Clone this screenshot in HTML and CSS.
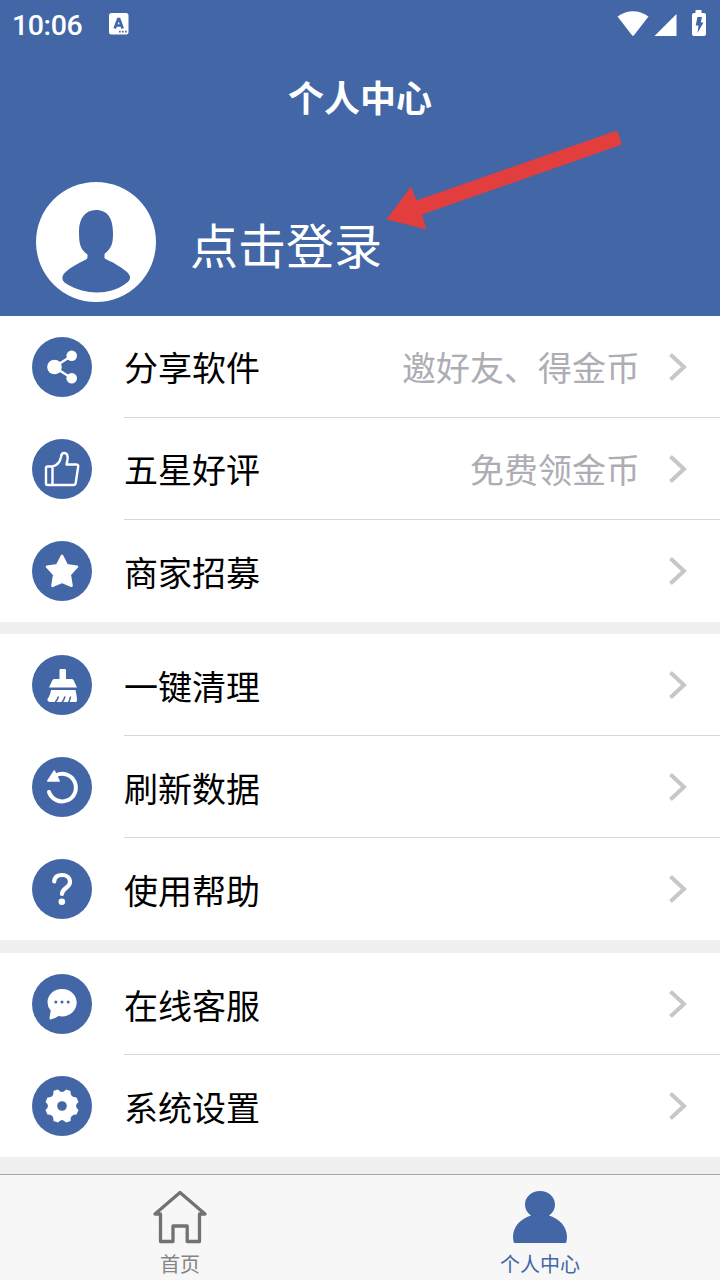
FILE: index.html
```html
<!DOCTYPE html>
<html lang="zh-CN">
<head>
<meta charset="utf-8">
<title>个人中心</title>
<link rel="stylesheet" href="styles.css">
</head>
<body>
<div class="screen">
  <header class="header">
    <div class="status">
      <span class="clock">10:06</span>
      <svg class="ime" width="20" height="22" viewBox="0 0 20 22"><rect width="19.500" height="21.500" rx="2.500" fill="#fff"/><path d="M5.700 15.500 9.200 6h1L13.700 15.500M7 12.500h5.500" fill="none" stroke="#4266a6" stroke-width="2.700"/><path d="M10 18.700h1.700M13 18.700h1.700M16 18.700h1.700" stroke="#4266a6" stroke-width="1.700"/></svg>
      <svg class="signals" width="92" height="28" viewBox="0 0 92 28">
        <path d="M0.500 6.500Q16-3.800 31.500 6.500L17 25.200q-1 1-2 0z" fill="#fff"/>
        <path d="M59.500 4v22H37.500z" fill="#fff"/>
        <path d="M78.500 0h6v3h2.500q2 0 2 2v19q0 2-2 2H77q-2 0-2-2V5q0-2 2-2h1.500z" fill="#fff"/>
        <path d="M80.500 7h4.500l-1.200 5.500h2.700l-6 10.500 1-7.500h-2.800z" fill="#4266a6"/>
      </svg>
    </div>
    <h1 class="title">个人中心</h1>
    <div class="profile">
      <svg class="avatar" width="120" height="120" viewBox="0 0 120 120"><circle cx="60" cy="60" r="60" fill="#fff"/><path d="M60 28C49 28 43 37 43 49c0 13 1 18 8.500 23.500v3Q51.500 77 47 79C38 83.500 27 90 26.500 95c-.5 4 2 5.500 5 7.500 18 10.500 42 10.500 57 0 3-2 6-4 5.500-8-1-5-11-10-17-14Q69 77 68.500 76v-4C76 66 77 61 77 51 77 37 72 28 60 28z" fill="#4266a6"/></svg>
      <span class="login">点击登录</span>
    </div>
    <svg class="arrow" width="236" height="102" viewBox="0 0 236 102"><path d="M0.500 89.500 25 56.500 30.500 70.500 231 0.500 236 14.500 36 84.500 40.500 99.500z" fill="#e33e3e"/></svg>
  </header>

  <main class="groups">
    <section class="group">
      <div class="row">
        <svg class="icon" viewBox="0 0 60 60"><circle class="disc" cx="30" cy="30" r="30"/><path d="M22 30 39.500 19M22 30l17.500 11" stroke="#fff" stroke-width="2.200"/><circle cx="22.500" cy="30" r="7.300" fill="#fff"/><circle cx="39.700" cy="18.800" r="5.300" fill="#fff"/><circle cx="39.700" cy="41.300" r="5.300" fill="#fff"/></svg>
        <div class="cell"><span class="label">分享软件</span><span class="note">邀好友、得金币</span><svg class="chevron" viewBox="0 0 18 28"><path d="m1.500 1.500 13.500 12.500L1.500 26.500"/></svg></div>
      </div>
      <div class="row">
        <svg class="icon" viewBox="0 0 60 60"><circle class="disc" cx="30" cy="30" r="30"/><path class="line" d="M20.500 46h-5q-1.500 0-1.500-1.500V29q0-1.500 1.500-1.500h5M20.500 46V27.500q7-1.500 8.500-9.500Q29.500 14 32 14c3.500 0 4 3.500 3.500 6.500L34.500 25.500H44q2.500 0 2.200 2L43.700 44q-.3 2-2.300 2z"/></svg>
        <div class="cell"><span class="label">五星好评</span><span class="note">免费领金币</span><svg class="chevron" viewBox="0 0 18 28"><path d="m1.500 1.500 13.500 12.500L1.500 26.500"/></svg></div>
      </div>
      <div class="row">
        <svg class="icon" viewBox="0 0 60 60"><circle class="disc" cx="30" cy="30" r="30"/><path d="m30 14.800 4.700 9.400 10.300 1.500-7.300 7.800L39.500 44.800 30 40.700 20.500 44.800 22.300 33.500 15 25.700l10.300-1.500z" fill="#fff" stroke="#fff" stroke-width="2.600" stroke-linejoin="round"/></svg>
        <div class="cell low"><span class="label">商家招募</span><svg class="chevron" viewBox="0 0 18 28"><path d="m1.500 1.500 13.500 12.500L1.500 26.500"/></svg></div>
      </div>
    </section>

    <section class="group tools">
      <div class="row">
        <svg class="icon" viewBox="0 0 60 60"><circle class="disc" cx="30" cy="30" r="30"/><path d="M27.500 15q0-1 1-1h4.500q1 0 1 1v9h5.500q1.500 0 2 1l3.500 7.500H17L20.500 25q.5-1 2-1h5zM19 35h24.500q1.500 6 1.500 10.500 0 1.500-1.500 1.500H18q-3-.5-2.500-3Q18 41 19 35z" fill="#fff"/><path d="M26.500 41.500Q25.500 45 23 47.500M33 41.500Q32 45 30 47.500M38.500 41.500Q38 45 36.500 47.500" fill="none" stroke="#4266a6" stroke-width="1.500"/></svg>
        <div class="cell low"><span class="label">一键清理</span><svg class="chevron" viewBox="0 0 18 28"><path d="m1.500 1.500 13.500 12.500L1.500 26.500"/></svg></div>
      </div>
      <div class="row">
        <svg class="icon" viewBox="0 0 60 60"><circle class="disc" cx="30" cy="30" r="30"/><path d="M24 18.200A13.800 13.800 0 1 1 17 35" fill="none" stroke="#fff" stroke-width="4" stroke-linecap="round"/><path d="M22.300 14 15.800 24h11.400z" fill="#fff" stroke="#fff" stroke-width="1.500" stroke-linejoin="round"/></svg>
        <div class="cell low"><span class="label">刷新数据</span><svg class="chevron" viewBox="0 0 18 28"><path d="m1.500 1.500 13.500 12.500L1.500 26.500"/></svg></div>
      </div>
      <div class="row">
        <svg class="icon" viewBox="0 0 60 60"><circle class="disc" cx="30" cy="30" r="30"/><path d="M22.200 22.500C22.500 18 25.500 16 30 16s8 2.800 8 7c0 6-8 6-8 12" fill="none" stroke="#fff" stroke-width="4.200" stroke-linecap="round"/><circle cx="29.800" cy="42.700" r="3.300" fill="#fff"/></svg>
        <div class="cell low"><span class="label">使用帮助</span><svg class="chevron" viewBox="0 0 18 28"><path d="m1.500 1.500 13.500 12.500L1.500 26.500"/></svg></div>
      </div>
    </section>

    <section class="group support">
      <div class="row">
        <svg class="icon" viewBox="0 0 60 60"><circle class="disc" cx="30" cy="30" r="30"/><path d="M30 15c8.500 0 14.700 6 14.700 13.500S38.500 42.500 30 42.500q-2 0-3.500-.4-4 3-8 3.300-1.300 0-1-1.200l1.200-7.700Q15.500 33 15.500 28.500C15.500 21 21.500 15 30 15z" fill="#fff"/><g fill="#4266a6"><circle cx="23.800" cy="28" r="1.500"/><circle cx="30" cy="28" r="1.500"/><circle cx="36.200" cy="28" r="1.500"/></g></svg>
        <div class="cell low"><span class="label">在线客服</span><svg class="chevron" viewBox="0 0 18 28"><path d="m1.500 1.500 13.500 12.500L1.500 26.500"/></svg></div>
      </div>
      <div class="row">
        <svg class="icon" viewBox="0 0 60 60"><circle class="disc" cx="30" cy="30" r="30"/><path d="M22.500 14.500 26 13.500Q30 18.500 34 13.500L38.500 15Q38 21.500 44.500 21.500L46.500 26Q41.500 30 46.500 34L44.500 38.500Q38 38 38.500 45L34 46.500Q30 41.500 26 46.500L21.500 45Q22 38 15.500 38.500L13.500 34Q18.500 30 13.500 26L15.500 21.500Q22 22 21.500 15z" fill="#fff"/><circle class="disc" cx="30" cy="30" r="4.800"/></svg>
        <div class="cell low"><span class="label">系统设置</span><svg class="chevron" viewBox="0 0 18 28"><path d="m1.500 1.500 13.500 12.500L1.500 26.500"/></svg></div>
      </div>
    </section>
  </main>

  <nav class="tabs">
    <a class="tab">
      <svg class="tab-icon" viewBox="0 0 54 54"><path d="M7.500 24H2L27 2.500 52 24h-5.500v27.500H34.200V36H20v15.500H7.500z" fill="none" stroke="#727272" stroke-width="3.300" stroke-linejoin="round"/></svg>
      <span>首页</span>
    </a>
    <a class="tab active">
      <svg class="tab-icon" viewBox="0 0 54 54"><path d="M27 1C18.500 1 12 7 12 14.500c0 4.500 2 8.500 6 11C7 29 0 37 0 47q0 3 1 6h52q1-3 1-6c0-10-7-18-18-21.500 4-2.500 6-6.500 6-11C42 7 35.500 1 27 1z" fill="#4266a6"/></svg>
      <span>个人中心</span>
    </a>
  </nav>
</div>
</body>
</html>
```

FILE: styles.css
```css
* {
  box-sizing: border-box;
}

body {
  margin: 0;
  font-family: "Noto Sans CJK SC", sans-serif;
  background: #f0f0f0;
}

.screen {
  width: 720px;
  height: 1280px;
  display: flex;
  flex-direction: column;
  overflow: hidden;
}

.header {
  position: relative;
  height: 316px;
  background: #4266a6;
  color: #fff;
}

.status {
  display: flex;
  align-items: center;
  height: 48px;
  padding: 0 13px 0 12px;
}

.clock {
  width: 97px;
  padding-top: 3px;
  font: 500 28.500px/40px Roboto, sans-serif;
  letter-spacing: -0.4px;
}

.signals {
  margin-left: auto;
  margin-right: -2px;
}

.title {
  margin: 0;
  height: 100px;
  font-size: 36px;
  font-weight: 700;
  line-height: 96px;
  text-align: center;
}

.profile {
  display: flex;
  align-items: center;
  gap: 34px;
  margin-top: 34px;
  padding-left: 36px;
}

.login {
  padding-top: 2px;
  font-size: 48px;
  line-height: 60px;
}

.arrow {
  position: absolute;
  left: 386px;
  top: 130px;
}

.groups {
  height: 858px;
}

.group {
  background: #fff;
}

.tools {
  margin-top: 12px;
}

.support {
  margin-top: 13px;
}

.row {
  display: flex;
  align-items: center;
  gap: 32px;
  height: 102px;
  padding-left: 32px;
}

.icon {
  width: 60px;
  height: 60px;
  flex: none;
}

.disc {
  fill: #4266a6;
}

.line {
  fill: none;
  stroke: #fff;
  stroke-width: 2.400px;
  stroke-linejoin: round;
}

.cell {
  flex: 1;
  display: flex;
  align-items: center;
  height: 102px;
  padding-right: 33px;
  border-bottom: 1px solid #d8d8da;
}

.row:last-child .cell {
  border-bottom-color: transparent;
}

.label,
.note {
  font-size: 34px;
  line-height: 50px;
}

.label {
  color: #000;
}

.low .label {
  padding-top: 2px;
}

.note {
  margin-left: auto;
  margin-right: 29px;
  color: #adadb5;
}

.chevron {
  width: 18px;
  height: 28px;
  margin-left: auto;
}

.note + .chevron {
  margin-left: 0;
}

.chevron path {
  fill: none;
  stroke: #c7c7c9;
  stroke-width: 4px;
}

.tabs {
  display: flex;
  height: 106px;
  border-top: 1px solid #a8a8a8;
  background: #f7f7f7;
}

.tab {
  flex: 1;
  display: flex;
  flex-direction: column;
  align-items: center;
  gap: 5px;
  padding-top: 15px;
  font-size: 20px;
  line-height: 30px;
  color: #858585;
}

.tab-icon {
  width: 54px;
  height: 54px;
  flex: none;
}

.tab.active {
  color: #4266a6;
}
```
